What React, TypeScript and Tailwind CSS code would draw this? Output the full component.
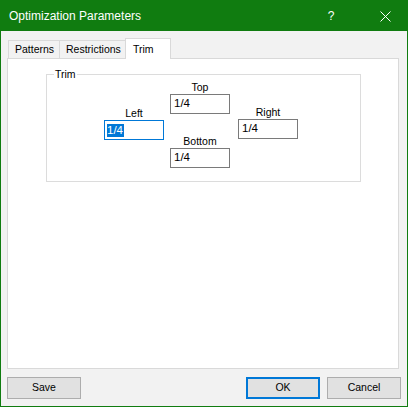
import React from "react"

const ui = { fontFamily: '"Liberation Sans", Arial, sans-serif' }

function TrimField({ label, value, focused }: { label: string; value: string; focused?: boolean }) {
  return (
    <div className="flex flex-col items-center w-[60px]">
      <div className="h-[13px] leading-[13px] text-[10.5px] text-black">{label}</div>
      <div
        className={`w-[60px] h-[20px] bg-white border flex items-center pl-[2px] text-[11.5px] text-black ${
          focused ? "border-[#0078d7]" : "border-[#7a7a7a]"
        }`}
      >
        {focused ? <span className="bg-[#0078d7] text-white pr-px leading-[13px]">{value}</span> : <span className="pl-px">{value}</span>}
      </div>
    </div>
  )
}

export default function App() {
  return (
    <div
      className="w-[408px] h-[407px] border border-[#107c10] bg-[#f2f2f2] flex flex-col overflow-hidden select-none"
      style={ui}
    >
      {/* title bar */}
      <div className="h-[30px] bg-[#107c10] flex items-center text-white shrink-0">
        <div className="pl-[8px] text-[12px] flex-1">Optimization Parameters</div>
        <div className="w-[46px] text-center text-[12px] mr-[7px]">?</div>
        <div className="w-[46px] flex justify-center items-center">
          <svg width="11" height="11" viewBox="0 0 11 11" className="ml-[2px]">
            <path d="M0.5 0.5 L10.5 10.5 M10.5 0.5 L0.5 10.5" stroke="white" strokeWidth="1" />
          </svg>
        </div>
      </div>

      <div className="flex-1 flex flex-col px-[6px] pt-[7px]">
        {/* tabs */}
        <div className="flex items-end h-[20px] ml-px text-[10.5px] text-black">
          <div className="w-[52px] h-[18px] border-l border-t border-r border-[#d9d9d9] flex items-center pl-[6px] pt-px">
            Patterns
          </div>
          <div className="w-[65px] h-[18px] border-t border-[#d9d9d9] flex items-center pl-[6px] pt-px">
            Restrictions
          </div>
          <div className="relative z-10 -mb-px w-[46px] h-[21px] bg-white border-l border-t border-r border-[#d9d9d9] flex items-start pl-[7px] pt-[3px]">
            Trim
          </div>
        </div>

        {/* panel */}
        <div className="w-[392px] h-[311px] bg-white border border-[#d9d9d9] pl-[38px] pt-[15px]">
          <div className="relative w-[315px] h-[108px] border border-[#dcdcdc]">
            <div className="absolute -top-[7px] left-[7px] px-px bg-white text-[10.5px] leading-[13px] text-black">Trim</div>
            <div className="flex items-start pl-[57px]">
              <div className="mt-[32px]">
                <TrimField label="Left" value="1/4" focused />
              </div>
              <div className="mt-[6px] ml-[6px] flex flex-col">
                <TrimField label="Top" value="1/4" />
                <div className="mt-[21px]">
                  <TrimField label="Bottom" value="1/4" />
                </div>
              </div>
              <div className="mt-[31px] ml-[8px]">
                <TrimField label="Right" value="1/4" />
              </div>
            </div>
          </div>
        </div>

        {/* buttons */}
        <div className="flex mt-[8px] text-[10.5px] text-black">
          <button className="w-[74px] h-[22px] bg-[#e1e1e1] border border-[#adadad]">Save</button>
          <div className="flex-1" />
          <button className="w-[74px] h-[22px] bg-[#e1e1e1] border-2 border-[#0078d7]">OK</button>
          <button className="w-[74px] h-[22px] bg-[#e1e1e1] border border-[#adadad] ml-[7px]">Cancel</button>
        </div>
      </div>
    </div>
  )
}
